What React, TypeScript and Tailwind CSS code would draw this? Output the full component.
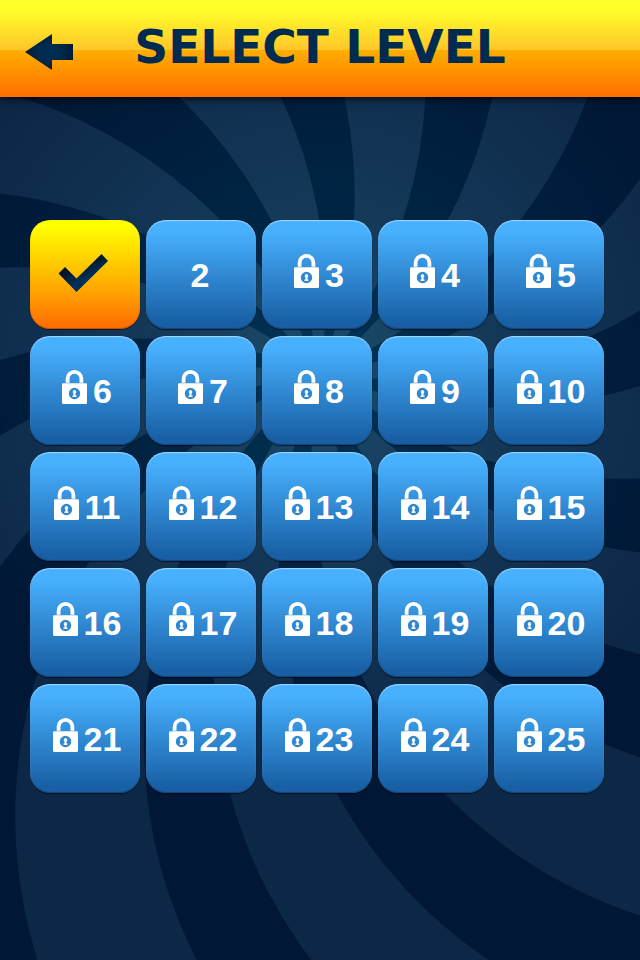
import React from 'react';

type LevelState = 'done' | 'open' | 'locked';

interface Level {
  id: number;
  state: LevelState;
}

const levels: Level[] = Array.from({ length: 25 }, (_, i) => ({
  id: i + 1,
  state: i === 0 ? 'done' : i === 1 ? 'open' : 'locked',
}));

// Swirl geometry: every ray edge is an arc that starts in the centre
const CENTER = { x: 320, y: 373 };
const ARC_RADIUS = 475;
const RAY_LENGTH = 760;

// Start and end angle of each light ray, clockwise from the top
const rays = [
  [22, 39],
  [52, 68],
  [82, 99],
  [112, 129],
  [142, 158],
  [172, 191],
  [204, 219],
  [231, 249],
  [262, 279],
  [292, 309],
  [322, 338],
  [352, 369],
];

const rayEnd = (startAngle: number) => {
  const bend = Math.asin(RAY_LENGTH / (2 * ARC_RADIUS));
  const angle = (startAngle * Math.PI) / 180 - bend;
  const x = CENTER.x + RAY_LENGTH * Math.sin(angle);
  const y = CENTER.y - RAY_LENGTH * Math.cos(angle);
  return `${x.toFixed(1)} ${y.toFixed(1)}`;
};

const arc = `A ${ARC_RADIUS} ${ARC_RADIUS} 0 0`;
const rayPath = (from: number, to: number) =>
  `M ${CENTER.x} ${CENTER.y} ${arc} 0 ${rayEnd(from)} L ${rayEnd(to)} ${arc} 1 ${CENTER.x} ${CENTER.y} Z`;

const Swirl: React.FC = () => (
  <svg
    className="absolute inset-0 -z-10 h-full w-full"
    viewBox="0 0 640 960"
    preserveAspectRatio="xMidYMid slice"
    aria-hidden="true"
  >
    <defs>
      <radialGradient id="glow" gradientUnits="userSpaceOnUse" cx={CENTER.x} cy={CENTER.y} r="400">
        <stop offset="0" stopColor="#00375a" />
        <stop offset="0.4" stopColor="#002544" />
        <stop offset="1" stopColor="#001735" />
      </radialGradient>
      <radialGradient id="ray" gradientUnits="userSpaceOnUse" cx={CENTER.x} cy={CENTER.y} r="400">
        <stop offset="0" stopColor="#c4d0e8" stopOpacity="0.14" />
        <stop offset="1" stopColor="#90ccff" stopOpacity="0.09" />
      </radialGradient>
    </defs>
    <rect width="640" height="960" fill="url(#glow)" />
    <g fill="url(#ray)">
      {rays.map(([from, to]) => (
        <path key={from} d={rayPath(from, to)} />
      ))}
    </g>
  </svg>
);

const BackArrow: React.FC = () => (
  <svg className="h-9 w-12" viewBox="0 0 48 36" aria-hidden="true">
    <defs>
      <radialGradient id="arrow-fill">
        <stop offset="0.4" stopColor="#002b50" />
        <stop offset="1" stopColor="#001c36" />
      </radialGradient>
    </defs>
    <path d="M0 18 27 0V10H48V26H27V36Z" fill="url(#arrow-fill)" />
  </svg>
);

const CheckMark: React.FC = () => (
  <svg className="h-[38px] w-[50px]" viewBox="0 0 50 38" aria-hidden="true">
    <defs>
      <linearGradient id="check-fill" x1="0.4" y1="0.3" x2="0.6" y2="0.6">
        <stop offset="0" stopColor="#001226" />
        <stop offset="1" stopColor="#002f56" />
      </linearGradient>
    </defs>
    <path d="M0.5 19.5 7 13 18.5 24.5 43.5 0 50 7 18.5 38Z" fill="url(#check-fill)" />
  </svg>
);

const LockIcon: React.FC = () => (
  <svg className="h-[34px] w-[25px] shrink-0" viewBox="0 0 25 34" aria-hidden="true">
    <path d="M5.600 12.800V8.800a6.900 6.900 0 0 1 13.800 0V12.800" fill="none" stroke="#fff" strokeWidth="3.800" />
    <path
      fill="#fff"
      fillRule="evenodd"
      d="M1.200 13.200H23.800a1.200 1.200 0 0 1 1.200 1.200V32.800a1.200 1.200 0 0 1-1.200 1.200H1.200A1.200 1.200 0 0 1 0 32.800V14.400a1.200 1.200 0 0 1 1.200-1.200ZM12.500 17.800a5.700 5.700 0 1 0 0 11.400 5.700 5.700 0 0 0 0-11.400Z"
    />
    <path d="M12.500 20.100a1.900 1.900 0 0 1 1 3.400V25.500H14.500V27.100H10.500V25.500H11.500V23.500a1.900 1.900 0 0 1 1-3.400Z" fill="#fff" />
  </svg>
);

const LevelTile: React.FC<{ level: Level }> = ({ level }) => {
  if (level.state === 'done') {
    return (
      <button
        type="button"
        aria-label={`Level ${level.id}, completed`}
        className="flex h-[109px] items-center justify-center rounded-[20px] bg-linear-to-b from-[#ffff00] from-5% to-[#ff7200] to-95% pr-1 pb-1 shadow-[0_1px_1px_rgba(0,0,0,0.5),inset_0_-1px_1px_rgba(120,40,0,0.5)]"
      >
        <CheckMark />
      </button>
    );
  }

  const locked = level.state === 'locked';

  return (
    <button
      type="button"
      aria-label={locked ? `Level ${level.id}, locked` : `Level ${level.id}`}
      className="flex h-[109px] items-center justify-center rounded-[20px] bg-linear-to-b from-[#48b1ff] from-10% to-[#185fa4] to-95% text-[34px] leading-10 font-bold text-white shadow-[0_1px_1px_rgba(0,0,0,0.6),inset_0_1px_1px_rgba(255,255,255,0.5),inset_0_-1px_1px_rgba(0,30,70,0.4)]"
    >
      {locked ? (
        <span className="flex items-center gap-1.5 pl-1">
          <span className="pb-2">
            <LockIcon />
          </span>
          {level.id}
        </span>
      ) : (
        <span className="pr-0.5">{level.id}</span>
      )}
    </button>
  );
};

const App: React.FC = () => {
  return (
    <div className="relative isolate min-h-screen overflow-hidden bg-[#001735] font-['Liberation_Sans',Arial,sans-serif]">
      <Swirl />

      <header className="grid h-[97px] grid-cols-[100px_1fr_100px] items-center bg-[linear-gradient(to_bottom,#ffff29_10%,#ffc62a_51%,#ffae00_52%,#ff7200_97%)] shadow-[0_2px_8px_rgba(0,0,0,0.8)]">
        <button type="button" aria-label="Back" className="pt-1.5 pl-[25px]">
          <BackArrow />
        </button>
        <h1 className="pb-1 text-center font-['DejaVu_Sans',Verdana,sans-serif] text-[47px] leading-none font-bold whitespace-nowrap text-[#002b50]">
          SELECT LEVEL
        </h1>
      </header>

      <main className="pt-[123px] pr-9 pb-12 pl-[30px]">
        <div className="grid grid-cols-5 gap-x-1.5 gap-y-[7px]">
          {levels.map((level) => (
            <LevelTile key={level.id} level={level} />
          ))}
        </div>
      </main>
    </div>
  );
};

export default App;
